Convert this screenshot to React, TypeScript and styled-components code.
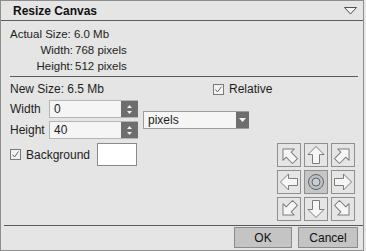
import styled, { createGlobalStyle } from "styled-components";

const GlobalStyle = createGlobalStyle`
  html, body {
    margin: 0;
    padding: 0;
    background: #e6e7e6;
  }
  body {
    font-family: "Liberation Sans", Arial, sans-serif;
    font-size: 12px;
    color: #1e1e1e;
  }
`;

const Panel = styled.div`
  box-sizing: border-box;
  width: 364px;
  height: 251px;
  border: 1px solid #8d8d8d;
  background: #e4e5e4;
  display: flex;
  flex-direction: column;
`;

const TitleBar = styled.div`
  box-sizing: border-box;
  height: 20px;
  border-bottom: 1px solid #5c5c5c;
  display: flex;
  align-items: center;
  justify-content: space-between;
  padding: 0 6px 0 12px;
  font-weight: bold;
  color: #111;
`;

const Body = styled.div`
  flex: 1;
  display: flex;
  flex-direction: column;
  padding: 5px 5px 0 9px;
`;

const InfoRow = styled.div`
  height: 16px;
  line-height: 16px;
  font-size: 11.5px;
  white-space: nowrap;
`;

const InfoLabel = styled.span`
  display: inline-block;
  width: 63px;
  text-align: right;
  padding-right: 2px;
`;

const Separator = styled.div`
  height: 1px;
  background: #5a5a5a;
  margin-top: ${(p: { top: number }) => p.top}px;
`;

const NewSizeRow = styled.div`
  margin-top: 4px;
  height: 16px;
  display: grid;
  grid-template-columns: 203px auto;
  align-items: center;
  white-space: nowrap;
`;

const CheckWrap = styled.label`
  display: flex;
  align-items: center;
  gap: 5px;
`;

const Box = styled.span`
  box-sizing: border-box;
  width: 11px;
  height: 11px;
  border: 1px solid #7a7a7a;
  background: #f2f2f2;
  display: flex;
  align-items: center;
  justify-content: center;
`;

const SizeBlock = styled.div`
  margin-top: 3px;
  display: flex;
  align-items: center;
`;

const Fields = styled.div`
  display: flex;
  flex-direction: column;
  gap: 3px;
`;

const FieldRow = styled.div`
  display: flex;
  align-items: center;
`;

const FieldLabel = styled.span`
  width: 39px;
`;

const SpinBox = styled.div`
  box-sizing: border-box;
  width: 89px;
  height: 18px;
  display: flex;
  border: 1px solid #b4b4b4;
  border-right: none;
  background: #f4f5f4;
`;

const FieldValue = styled.span`
  flex: 1;
  padding-left: 4px;
  line-height: 17px;
`;

const DarkButton = styled.span`
  width: ${(p: { w: number }) => p.w}px;
  background: #6e6e6e;
  display: flex;
  align-items: center;
  justify-content: center;
`;

const Select = styled.div`
  box-sizing: border-box;
  margin-left: 5px;
  width: 106px;
  height: 18px;
  display: flex;
  border: 1px solid #9c9c9c;
  border-right: none;
  background: #f4f5f4;
`;

const LowerRow = styled.div`
  margin-top: 4px;
  display: flex;
  align-items: flex-start;
`;

const BackgroundRow = styled.div`
  height: 23px;
  display: flex;
  align-items: center;
`;

const BgText = styled.span`
  width: 71px;
`;

const Swatch = styled.div`
  box-sizing: border-box;
  width: 40px;
  height: 23px;
  border: 1px solid #8a8a8a;
  background: #ffffff;
`;

const ArrowGrid = styled.div`
  margin-left: auto;
  margin-right: 3px;
  display: grid;
  grid-template-columns: repeat(3, 24px);
  grid-auto-rows: 24px;
  gap: 3px;
`;

const Cell = styled.div`
  box-sizing: border-box;
  border: 1px solid #8f8f8f;
  background: ${(p: { active?: boolean }) => (p.active ? "#c6c6c6" : "#e4e5e4")};
  display: flex;
  align-items: center;
  justify-content: center;
`;

const Footer = styled.div`
  box-sizing: border-box;
  height: 25px;
  margin-left: 3px;
  border-top: 1px solid #5a5a5a;
  display: flex;
  justify-content: flex-end;
  gap: 6px;
  padding: 1px 5px 0 0;
`;

const Button = styled.div`
  box-sizing: border-box;
  width: ${(p: { w: number }) => p.w}px;
  height: 21px;
  border: 1px solid #8a8a8a;
  background: #c4c4c4;
  display: flex;
  align-items: center;
  justify-content: center;
  color: #111;
`;

function Tick() {
  return (
    <Box>
      <svg width="9" height="9" viewBox="0 0 9 9">
        <polyline points="1.5,4.5 3.5,7 7.5,1.5" fill="none" stroke="#6a6a6a" strokeWidth="1" />
      </svg>
    </Box>
  );
}

function Spinner() {
  return (
    <DarkButton w={17}>
      <svg width="7" height="11" viewBox="0 0 7 11">
        <polygon points="3.5,1 6,4 1,4" fill="#f0f0f0" />
        <polygon points="1,7 6,7 3.5,10" fill="#f0f0f0" />
      </svg>
    </DarkButton>
  );
}

function Arrow({ angle }: { angle: number }) {
  return (
    <svg width="22" height="22" viewBox="0 0 22 22">
      <polygon
        points="11,2.5 19,10.5 14.5,10.5 14.5,19.5 7.5,19.5 7.5,10.5 3,10.5"
        fill="#f6f6f6"
        stroke="#7d7d7d"
        strokeWidth="1"
        strokeLinejoin="round"
        transform={`rotate(${angle} 11 11)`}
      />
    </svg>
  );
}

const arrows = [315, 0, 45, 270, -1, 90, 225, 180, 135];

export default function App() {
  return (
    <>
      <GlobalStyle />
      <Panel>
        <TitleBar>
          <span>Resize Canvas</span>
          <svg width="13" height="8" viewBox="0 0 13 8">
            <polygon points="0.5,0.5 12.5,0.5 6.5,7" fill="#f2f2f2" stroke="#5a4a52" strokeWidth="1" />
          </svg>
        </TitleBar>
        <Body>
          <InfoRow>Actual Size: 6.0 Mb</InfoRow>
          <InfoRow>
            <InfoLabel>Width:</InfoLabel>768 pixels
          </InfoRow>
          <InfoRow>
            <InfoLabel>Height:</InfoLabel>512 pixels
          </InfoRow>
          <Separator top={2} />
          <NewSizeRow>
            <span>New Size: 6.5 Mb</span>
            <CheckWrap>
              <Tick />
              <span>Relative</span>
            </CheckWrap>
          </NewSizeRow>
          <SizeBlock>
            <Fields>
              <FieldRow>
                <FieldLabel>Width</FieldLabel>
                <SpinBox>
                  <FieldValue>0</FieldValue>
                  <Spinner />
                </SpinBox>
              </FieldRow>
              <FieldRow>
                <FieldLabel>Height</FieldLabel>
                <SpinBox>
                  <FieldValue>40</FieldValue>
                  <Spinner />
                </SpinBox>
              </FieldRow>
            </Fields>
            <Select>
              <FieldValue>pixels</FieldValue>
              <DarkButton w={13}>
                <svg width="7" height="4" viewBox="0 0 7 4">
                  <polygon points="0,0 7,0 3.5,4" fill="#f4f4f4" />
                </svg>
              </DarkButton>
            </Select>
          </SizeBlock>
          <LowerRow>
            <BackgroundRow>
              <CheckWrap>
                <Tick />
                <BgText>Background</BgText>
              </CheckWrap>
              <Swatch />
            </BackgroundRow>
            <ArrowGrid>
              {arrows.map((a, i) =>
                a < 0 ? (
                  <Cell key={i} active>
                    <svg width="18" height="18" viewBox="0 0 18 18">
                      <circle cx="9" cy="9" r="7.5" fill="#b9c0c8" stroke="#666" strokeWidth="1" />
                      <circle cx="9" cy="9" r="4" fill="#c9ced5" stroke="#666" strokeWidth="1" />
                    </svg>
                  </Cell>
                ) : (
                  <Cell key={i}>
                    <Arrow angle={a} />
                  </Cell>
                )
              )}
            </ArrowGrid>
          </LowerRow>
        </Body>
        <Footer>
          <Button w={58}>OK</Button>
          <Button w={60}>Cancel</Button>
        </Footer>
      </Panel>
    </>
  );
}
